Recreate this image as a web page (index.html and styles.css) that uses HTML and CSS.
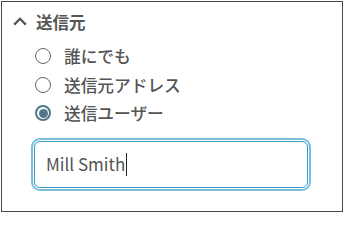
FILE: index.html
```html
<!DOCTYPE html>
<html lang="ja">
<head>
<meta charset="utf-8">
<title>送信元</title>
<link rel="stylesheet" href="styles.css">
</head>
<body>
<section class="panel">
  <div class="header">
    <svg class="chevron" width="14" height="9" viewBox="0 0 14 9" aria-hidden="true">
      <polyline points="1.2,7.6 7,1.8 12.8,7.6" fill="none" stroke="#555" stroke-width="2.3" stroke-linecap="butt" stroke-linejoin="miter"/>
    </svg>
    <span class="title">送信元</span>
  </div>
  <div class="options">
    <label class="option"><span class="radio"></span><span class="label">誰にでも</span></label>
    <label class="option"><span class="radio"></span><span class="label">送信元アドレス</span></label>
    <label class="option"><span class="radio checked"></span><span class="label">送信ユーザー</span></label>
  </div>
  <div class="field-wrap">
    <div class="field"><span class="value">Mill Smith</span><span class="caret"></span></div>
  </div>
</section>
</body>
</html>
```

FILE: styles.css
```css
html, body {
  margin: 0;
  padding: 0;
  background: #ffffff;
}

body {
  font-family: "Noto Sans CJK JP", "Noto Sans", sans-serif;
  color: #555555;
}

.panel {
  box-sizing: border-box;
  margin: 1px;
  width: 342px;
  height: 211px;
  border: 1px solid #4a4a4a;
  padding: 8px 0 0 11px;
}

.header {
  display: flex;
  align-items: center;
  height: 24px;
  gap: 9px;
}

.chevron {
  display: block;
  margin-top: -1px;
}

.title {
  font-size: 16.5px;
  font-weight: 700;
  line-height: 24px;
  color: #555555;
}

.options {
  display: flex;
  flex-direction: column;
  margin-top: 8px;
  padding-left: 22px;
}

.option {
  display: flex;
  align-items: center;
  height: 28.5px;
  gap: 13px;
}

.radio {
  box-sizing: border-box;
  width: 16px;
  height: 16px;
  border: 1.3px solid #666666;
  border-radius: 50%;
  display: flex;
  align-items: center;
  justify-content: center;
  flex: none;
}

.radio.checked {
  border: 2px solid #52778a;
}

.radio.checked::after {
  content: "";
  width: 9px;
  height: 9px;
  border-radius: 50%;
  background: #52778a;
}

.label {
  font-size: 16.7px;
  font-weight: 500;
  line-height: 20px;
  color: #555555;
}

.field-wrap {
  margin-top: 13px;
  padding-left: 21px;
}

.field {
  box-sizing: border-box;
  width: 274px;
  height: 47px;
  border: 1.5px solid #3a9cc4;
  border-radius: 6px;
  box-shadow: 0 0 0 1px #ffffff, 0 0 0 3px #74c0dc;
  display: flex;
  align-items: center;
  padding-left: 11px;
}

.value {
  font-size: 17px;
  font-weight: 400;
  line-height: 24px;
  color: #555555;
}

.caret {
  width: 1px;
  height: 23px;
  background: #222222;
  margin-left: 1px;
}
```
